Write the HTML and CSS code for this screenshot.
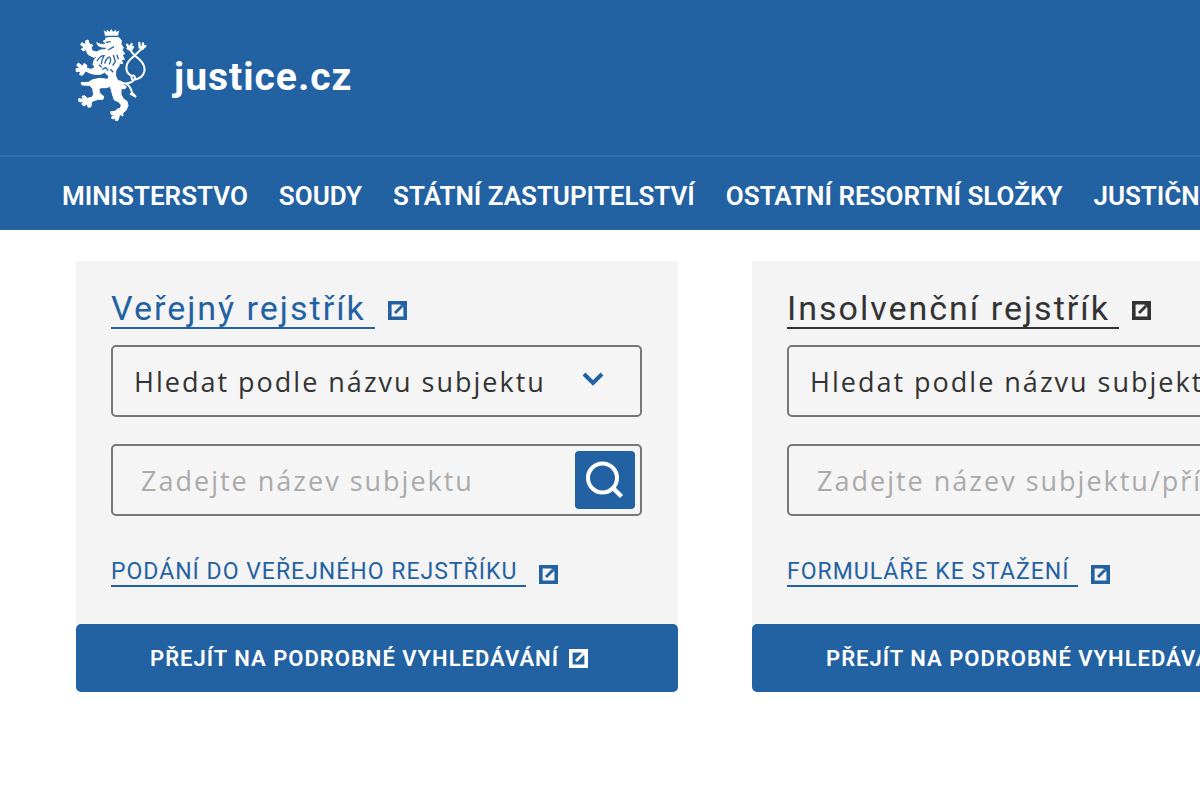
FILE: index.html
```html
<!DOCTYPE html>
<html lang="cs">
<head>
<meta charset="utf-8">
<meta name="viewport" content="width=device-width, initial-scale=1">
<title>justice.cz</title>
<link rel="stylesheet" href="styles.css">
</head>
<body>
<svg class="sprite" aria-hidden="true">
  <symbol id="external" viewBox="0 0 19 19">
    <path fill="none" stroke="currentColor" stroke-width="3.600" d="M1.800 1.800H17.200V17.200H1.800Z"/>
    <path fill="none" stroke="currentColor" stroke-width="2.800" d="M7 12L14 5"/>
    <path fill="currentColor" d="M12 3H16V7Z"/>
  </symbol>
  <symbol id="magnifier" viewBox="0 0 40 40">
    <g fill="none" stroke="currentColor"><circle cx="17.500" cy="18" r="14.500" stroke-width="4"/><path stroke-width="4.500" d="M28 28L36.500 36.500"/></g>
  </symbol>
</svg>
<header class="header">
  <a class="brand" href="#">
    <svg class="lion" viewBox="45 25 216 285" aria-hidden="true">
      <g fill="#fff" stroke="#fff" stroke-linejoin="round">
        <path d="M132 33l8 5 1-7 8 6 5-8 5 8 8-6 1 7 9-5-4 18h-37z"/>
        <path stroke-width="3" d="M137 56L152 52L176 53L184 62L183 74L190 84L186 91L194 102L187 106L193 119L184 121L188 132L178 130L177 139L168 151L166 166L172 180L184 191L199 201L195 207L183 207L183 224L190 238L201 245L204 258L198 272L188 280L189 289L179 284L176 296L173 303L166 302L168 292L161 298L153 294L163 286L154 285L152 276L165 275L173 268L181 266L184 256L175 246L163 241L158 226L154 212L151 200L139 204L122 204L117 210L120 222L131 230L129 239L115 239L101 243L94 249L93 261L84 263L82 252L72 259L65 253L72 247L57 246L56 237L70 239L66 230L74 228L82 236L95 233L101 225L98 206L88 197L66 196L63 189L86 188L96 181L118 176L143 179L147 170L134 158L121 164L103 164L89 160L77 154L67 167L59 165L62 155L49 156L48 147L61 147L50 137L55 130L69 140L72 131L80 136L80 146L94 149L105 143L99 134L103 120L112 110L101 113L85 105L80 96L81 88L70 94L64 88L73 82L62 76L65 69L78 75L76 64L84 61L88 73L98 76L94 84L96 93L109 97L122 91L137 90L140 83L125 82L115 78L110 69L121 74L134 74L138 69L129 65L137 61Z"/>
      </g>
      <g fill="none" stroke="#2362a2" stroke-width="4">
        <path d="M136 50h40M138 68l14-2M144 91L162 81M111 124Q120 108 132 108Q125 118 124 134M134 132Q137 118 149 111M148 134Q154 123 151 113M160 106L166 125L158 138M127 149L137 144L145 153M151 149L160 158M171 105l4 14M117 135l8 8"/>
      </g>
      <g fill="none" stroke="#fff" stroke-linecap="round" stroke-width="6">
        <path d="M179 185C195 197 222 190 225 174C222 161 208 170 218 181M216 169C196 161 193 137 211 119C224 106 243 94 246 82M208 80C210 96 222 105 239 120C263 142 257 174 223 180M196 192C208 196 213 205 216 219L228 232L212 223"/>
        <path stroke-width="7" d="M201 75l8 10 6-12M203 86l10 5 6-9M238 70l1 13 10 4M249 71l-2 15 9-7"/>
      </g>
    </svg>
    <span class="brand-name">justice.cz</span>
  </a>
  <nav class="nav">
    <a href="#">MINISTERSTVO</a>
    <a href="#">SOUDY</a>
    <a href="#">STÁTNÍ ZASTUPITELSTVÍ</a>
    <a href="#">OSTATNÍ RESORTNÍ SLOŽKY</a>
    <a href="#">JUSTIČNÍ</a>
  </nav>
</header>
<main class="cards">
  <section class="card">
    <div class="card-body">
      <h2 class="title"><a class="ext" href="#"><span class="line">Veřejný rejstřík</span><svg class="icon"><use href="#external"/></svg></a></h2>
      <div class="select-box">
        <select class="select" aria-label="Způsob hledání ve veřejném rejstříku"><option>Hledat podle názvu subjektu</option></select>
        <svg class="chevron" viewBox="0 0 22 14" aria-hidden="true"><path d="M2 2L11 11L20 2"/></svg>
      </div>
      <form class="search">
        <input class="input" type="text" aria-label="Název subjektu" placeholder="Zadejte název subjektu">
        <button class="search-btn" type="button" aria-label="Hledat"><svg class="glass"><use href="#magnifier"/></svg></button>
      </form>
      <p class="more"><a class="ext" href="#"><span class="line">PODÁNÍ DO VEŘEJNÉHO REJSTŘÍKU</span><svg class="icon"><use href="#external"/></svg></a></p>
    </div>
    <a class="detail" href="#">PŘEJÍT NA PODROBNÉ VYHLEDÁVÁNÍ<svg class="icon"><use href="#external"/></svg></a>
  </section>
  <section class="card">
    <div class="card-body">
      <h2 class="title title-dark"><a class="ext" href="#"><span class="line">Insolvenční rejstřík</span><svg class="icon"><use href="#external"/></svg></a></h2>
      <div class="select-box">
        <select class="select" aria-label="Způsob hledání v insolvenčním rejstříku"><option>Hledat podle názvu subjektu</option></select>
        <svg class="chevron" viewBox="0 0 22 14" aria-hidden="true"><path d="M2 2L11 11L20 2"/></svg>
      </div>
      <form class="search">
        <input class="input" type="text" aria-label="Název subjektu nebo příjmení" placeholder="Zadejte název subjektu/příjmení">
        <button class="search-btn" type="button" aria-label="Hledat"><svg class="glass"><use href="#magnifier"/></svg></button>
      </form>
      <p class="more"><a class="ext" href="#"><span class="line">FORMULÁŘE KE STAŽENÍ</span><svg class="icon"><use href="#external"/></svg></a></p>
    </div>
    <a class="detail" href="#">PŘEJÍT NA PODROBNÉ VYHLEDÁVÁNÍ<svg class="icon"><use href="#external"/></svg></a>
  </section>
</main>
</body>
</html>
```
FILE: styles.css
```css
* { box-sizing: border-box; }
body {
  margin: 0;
  overflow-x: hidden;
  background: #fff;
  color: #333;
  font-family: Roboto, "Liberation Sans", sans-serif;
}
a { color: inherit; text-decoration: none; }
.sprite { position: absolute; width: 0; height: 0; }

.header { background: #2362a2; color: #fff; }
.brand {
  display: flex;
  align-items: center;
  gap: 27px;
  padding: 28px 75px 32px;
}
.lion { width: 72px; height: 95px; }
.brand-name { padding-top: 2px; font-size: 39px; font-weight: 700; line-height: 48px; letter-spacing: 1px; }
.nav {
  display: flex;
  gap: 31px;
  padding: 6px 62px 0;
  overflow: hidden;
  border-top: 2px solid #2e6fb0;
  font-size: 26px;
  font-weight: 600;
  line-height: 67px;
  white-space: nowrap;
}

.cards {
  display: grid;
  grid-template-columns: repeat(2, minmax(602px, 1fr));
  gap: 74px;
  padding: 31px 76px;
}
.card { color: #2362a2; }
.card-body { padding: 29px 36px 37px 35px; background: #f4f4f4; }
.title {
  margin: 0 0 16px;
  font-size: 34px;
  font-weight: 400;
  line-height: 37px;
  letter-spacing: 2px;
}
.title-dark { color: #333; }
.ext { display: flex; align-items: center; gap: 13px; }
.line { padding-right: 9px; border-bottom: 2px solid; white-space: nowrap; }
.icon { flex: none; width: 19px; height: 19px; }
.ext .icon { margin-top: 2px; }

.select-box, .search { display: grid; align-items: center; }
.select-box { margin-bottom: 27px; }
.select-box > *, .search > * { grid-area: 1 / 1; }
.select, .input {
  width: 100%;
  height: 72px;
  border: 2px solid #777;
  border-radius: 5px;
  background: #f5f5f5;
  color: #333;
  font-family: "Open Sans", "Noto Sans", sans-serif;
  font-size: 27px;
  letter-spacing: 2px;
}
.select { appearance: none; padding: 0 21px; }
.input { padding: 0 72px 0 28px; }
.input::placeholder { color: #aaa; opacity: 1; }
.chevron {
  justify-self: end;
  width: 22px;
  height: 14px;
  margin: 0 38px 4px 0;
  fill: none;
  stroke: #2362a2;
  stroke-width: 4;
  pointer-events: none;
}
.search-btn {
  display: grid;
  place-items: center;
  justify-self: end;
  width: 60px;
  height: 58px;
  margin-right: 7px;
  padding: 0;
  border: 0;
  border-radius: 4px;
  background: #2362a2;
  color: #fff;
}
.glass { width: 40px; height: 40px; }
.more { margin: 43px 0 0; font-size: 23px; line-height: 26px; letter-spacing: 1px; }
.more .line { padding-right: 9px; }
.detail {
  display: flex;
  align-items: center;
  justify-content: center;
  gap: 10px;
  height: 68px;
  padding-right: 16px;
  border-radius: 5px;
  background: #2362a2;
  color: #fff;
  font-size: 22px;
  font-weight: 600;
  letter-spacing: 1px;
  white-space: nowrap;
}
```
